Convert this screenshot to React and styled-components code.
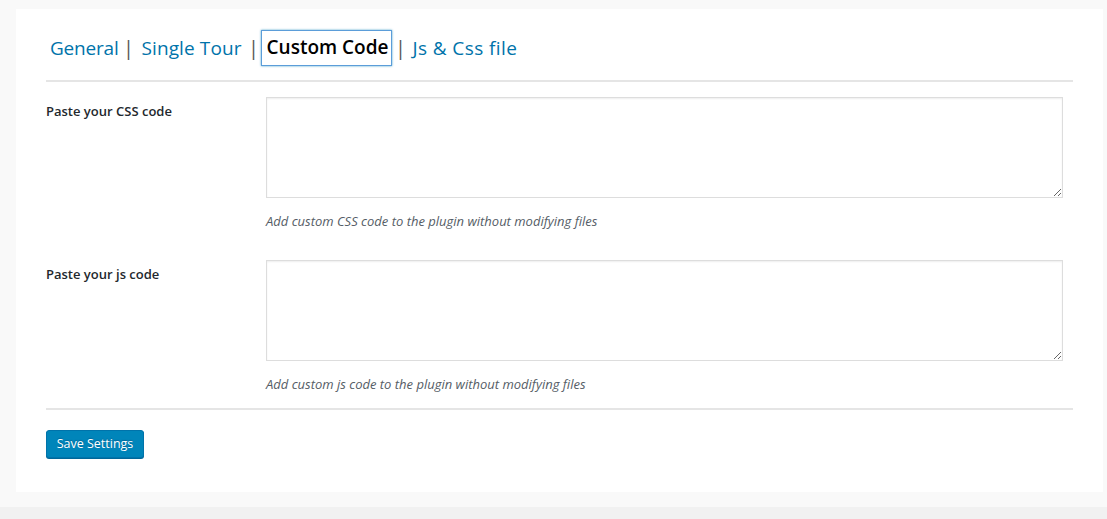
import React from "react";
import styled, { createGlobalStyle } from "styled-components";

const Global = createGlobalStyle`
  html, body { margin: 0; padding: 0; }
  body {
    background: #f1f1f1;
    font-family: "Open Sans", "Noto Sans", sans-serif;
    color: #23282d;
  }
`;

const Page = styled.div`
  background: #f9f9f9;
  padding: 9px 4px 15px 16px;
  width: 1107px;
  box-sizing: border-box;
`;

const Panel = styled.div`
  background: #fff;
  padding: 20px 30px 34px 30px;
  height: 483px;
  box-sizing: border-box;
`;

const Tabs = styled.nav`
  display: flex;
  align-items: center;
  height: 36px;
  padding-left: 4px;
  padding-top: 1px;
  margin-bottom: 14px;
  font-size: 19px;
  line-height: 1;
`;

const Tab = styled.a`
  color: ${(p) => (p.$active ? "#000" : "#0073aa")};
  text-decoration: none;
  font-weight: ${(p) => (p.$active ? 600 : 400)};
  padding: ${(p) => (p.$active ? "7px 3px 8px 5px" : "0")};
  margin-top: ${(p) => (p.$active ? "-1px" : "0")};
  border: ${(p) => (p.$active ? "1px solid #5b9dd9" : "none")};
  box-shadow: ${(p) => (p.$active ? "0 0 2px rgba(30,140,190,0.8)" : "none")};
  white-space: nowrap;
  letter-spacing: ${(p) => p.$ls || 0}px;
`;

const Sep = styled.span`
  display: inline-block;
  width: 12px;
  text-align: center;
  color: #555;
  font-size: 20px;
  margin-left: ${(p) => p.$l}px;
  margin-right: ${(p) => p.$r}px;
`;

const Rule = styled.hr`
  margin: 0;
  border: 0;
  border-top: 2px solid #e5e5e5;
`;

const Table = styled.div`
  display: flex;
  flex-direction: column;
`;

const Row = styled.div`
  display: flex;
`;

const Label = styled.div`
  width: 200px;
  flex: none;
  padding: 21px 10px 20px 0;
  font-size: 13px;
  font-weight: 600;
  line-height: 1.3;
  color: #23282d;
`;

const Field = styled.div`
  flex: 1;
  padding: 15px 10px 14px 10px;
`;

const Area = styled.textarea`
  display: block;
  width: 100%;
  height: 101px;
  box-sizing: border-box;
  border: 1px solid #ddd;
  box-shadow: inset 0 1px 2px rgba(0,0,0,0.07);
  background: #fff;
  resize: vertical;
  margin: 0;
`;

const Desc = styled.p`
  margin: 14px 0 0;
  font-size: 13px;
  font-style: italic;
  color: #555d66;
  line-height: 19px;
`;

const Submit = styled.div`
  padding-top: 20px;
`;

const Button = styled.button`
  background: #0085ba;
  border: 1px solid #0073aa;
  border-radius: 3px;
  box-shadow: 0 1px 0 #006799;
  color: #fff;
  font-family: "Open Sans", "Noto Sans", sans-serif;
  font-size: 12.5px;
  height: 28px;
  padding: 0 0 1px;
  width: 98px;
  white-space: nowrap;
  text-shadow: 0 -1px 1px #006799;
  cursor: pointer;
`;

export default function App() {
  return (
    <>
      <Global />
      <Page>
        <Panel>
          <Tabs>
            <Tab href="#" $ls={-0.2}>General</Tab>
            <Sep $l={4} $r={7}>|</Sep>
            <Tab href="#" $ls={0.1}>Single Tour</Tab>
            <Sep $l={6} $r={1}>|</Sep>
            <Tab href="#" $active>Custom Code</Tab>
            <Sep $l={2} $r={6}>|</Sep>
            <Tab href="#" $ls={0.4}>Js &amp; Css file</Tab>
          </Tabs>
          <Rule />
          <Table>
            <Row>
              <Label>Paste your CSS code</Label>
              <Field>
                <Area />
                <Desc>Add custom CSS code to the plugin without modifying files</Desc>
              </Field>
            </Row>
            <Row>
              <Label>Paste your js code</Label>
              <Field>
                <Area />
                <Desc>Add custom js code to the plugin without modifying files</Desc>
              </Field>
            </Row>
          </Table>
          <Rule />
          <Submit>
            <Button>Save Settings</Button>
          </Submit>
        </Panel>
      </Page>
    </>
  );
}
